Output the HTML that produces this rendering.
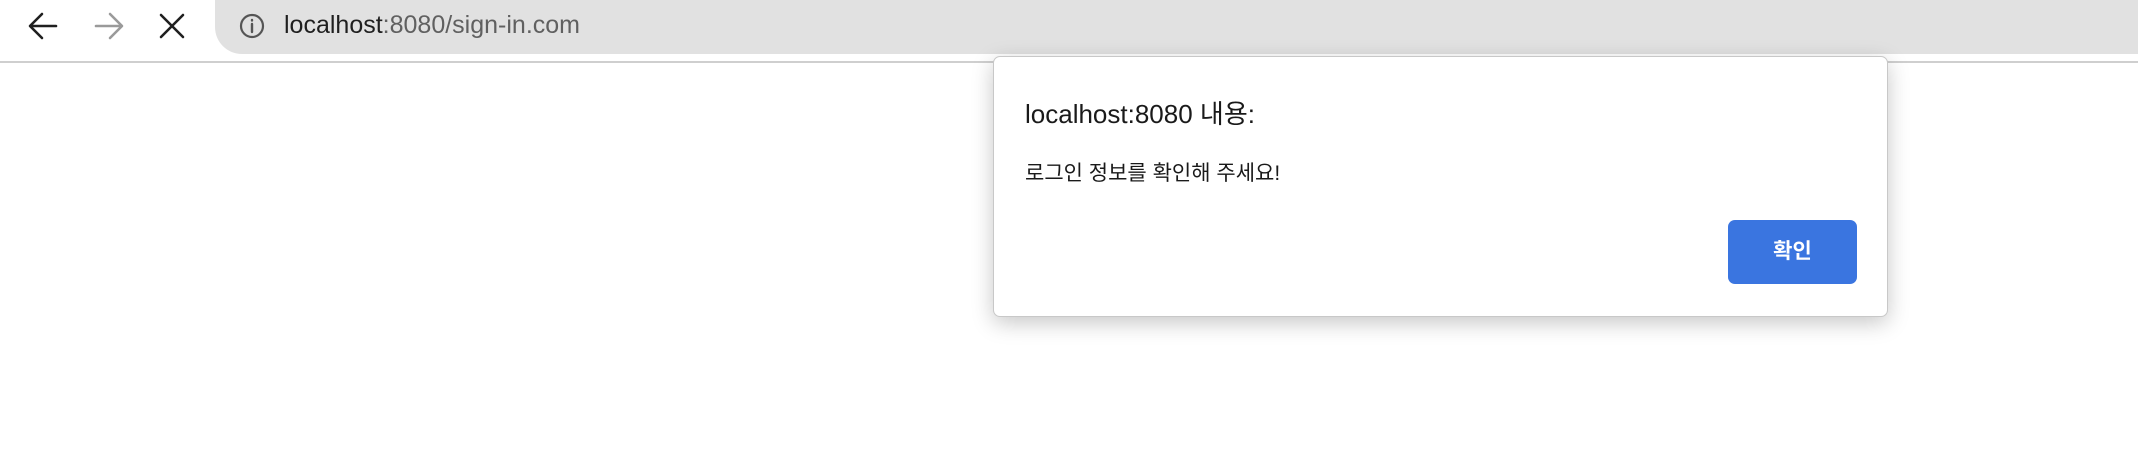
<!DOCTYPE html>
<html><head><meta charset="utf-8"><style>
body{margin:0;width:2138px;height:476px;background:#fff;position:relative;overflow:hidden;font-family:"Liberation Sans","Noto Sans CJK KR",sans-serif}
.top{position:absolute;left:0;top:0;width:2138px;height:61px;background:#fff;border-bottom:2px solid #cfcfcf}
.bar{position:absolute;left:215px;top:0;right:0;height:54px;background:#e1e1e1;border-radius:0 0 0 27px}
.url{position:absolute;left:284px;top:11px;font-size:25px;color:#1f1f1f}
.url span{color:#606060}
.dlg{position:absolute;left:993px;top:56px;width:893px;height:259px;background:#fff;border:1px solid #c8c8c8;border-radius:7px;box-shadow:0 6px 22px rgba(0,0,0,.22)}
.t{position:absolute;left:31px;top:37px;font-size:26px;color:#1a1a1a}
.m{position:absolute;left:31px;top:100px;font-size:21px;color:#1a1a1a}
.b{position:absolute;left:734px;top:163px;width:129px;height:64px;background:#3a75e0;border-radius:7px;color:#fff;font-size:21px;font-weight:bold;text-align:center;line-height:64px}
</style></head><body>
<div class="top">
<div class="bar"></div>
<svg width="400" height="56" style="position:absolute;left:0;top:0">
<g fill="none" stroke-width="2.6" stroke-linecap="round" stroke-linejoin="round">
<path d="M56 26H31M42 14L30 26L42 38" stroke="#1f1f1f"/>
<path d="M96 26H121M110 14L122 26L110 38" stroke="#9a9a9a"/>
<path d="M161 15L183 37M183 15L161 37" stroke="#1f1f1f"/>
<circle cx="252" cy="26" r="11" stroke="#555" stroke-width="2.2"/>
<path d="M252 24V32M252 20V20.5" stroke="#555" stroke-width="2.4"/>
</g></svg>
<div class="url">localhost<span>:8080/sign-in.com</span></div>
</div>
<div class="dlg">
<div class="t">localhost:8080 내용:</div>
<div class="m">로그인 정보를 확인해 주세요!</div>
<div class="b">확인</div>
</div>
</body></html>
